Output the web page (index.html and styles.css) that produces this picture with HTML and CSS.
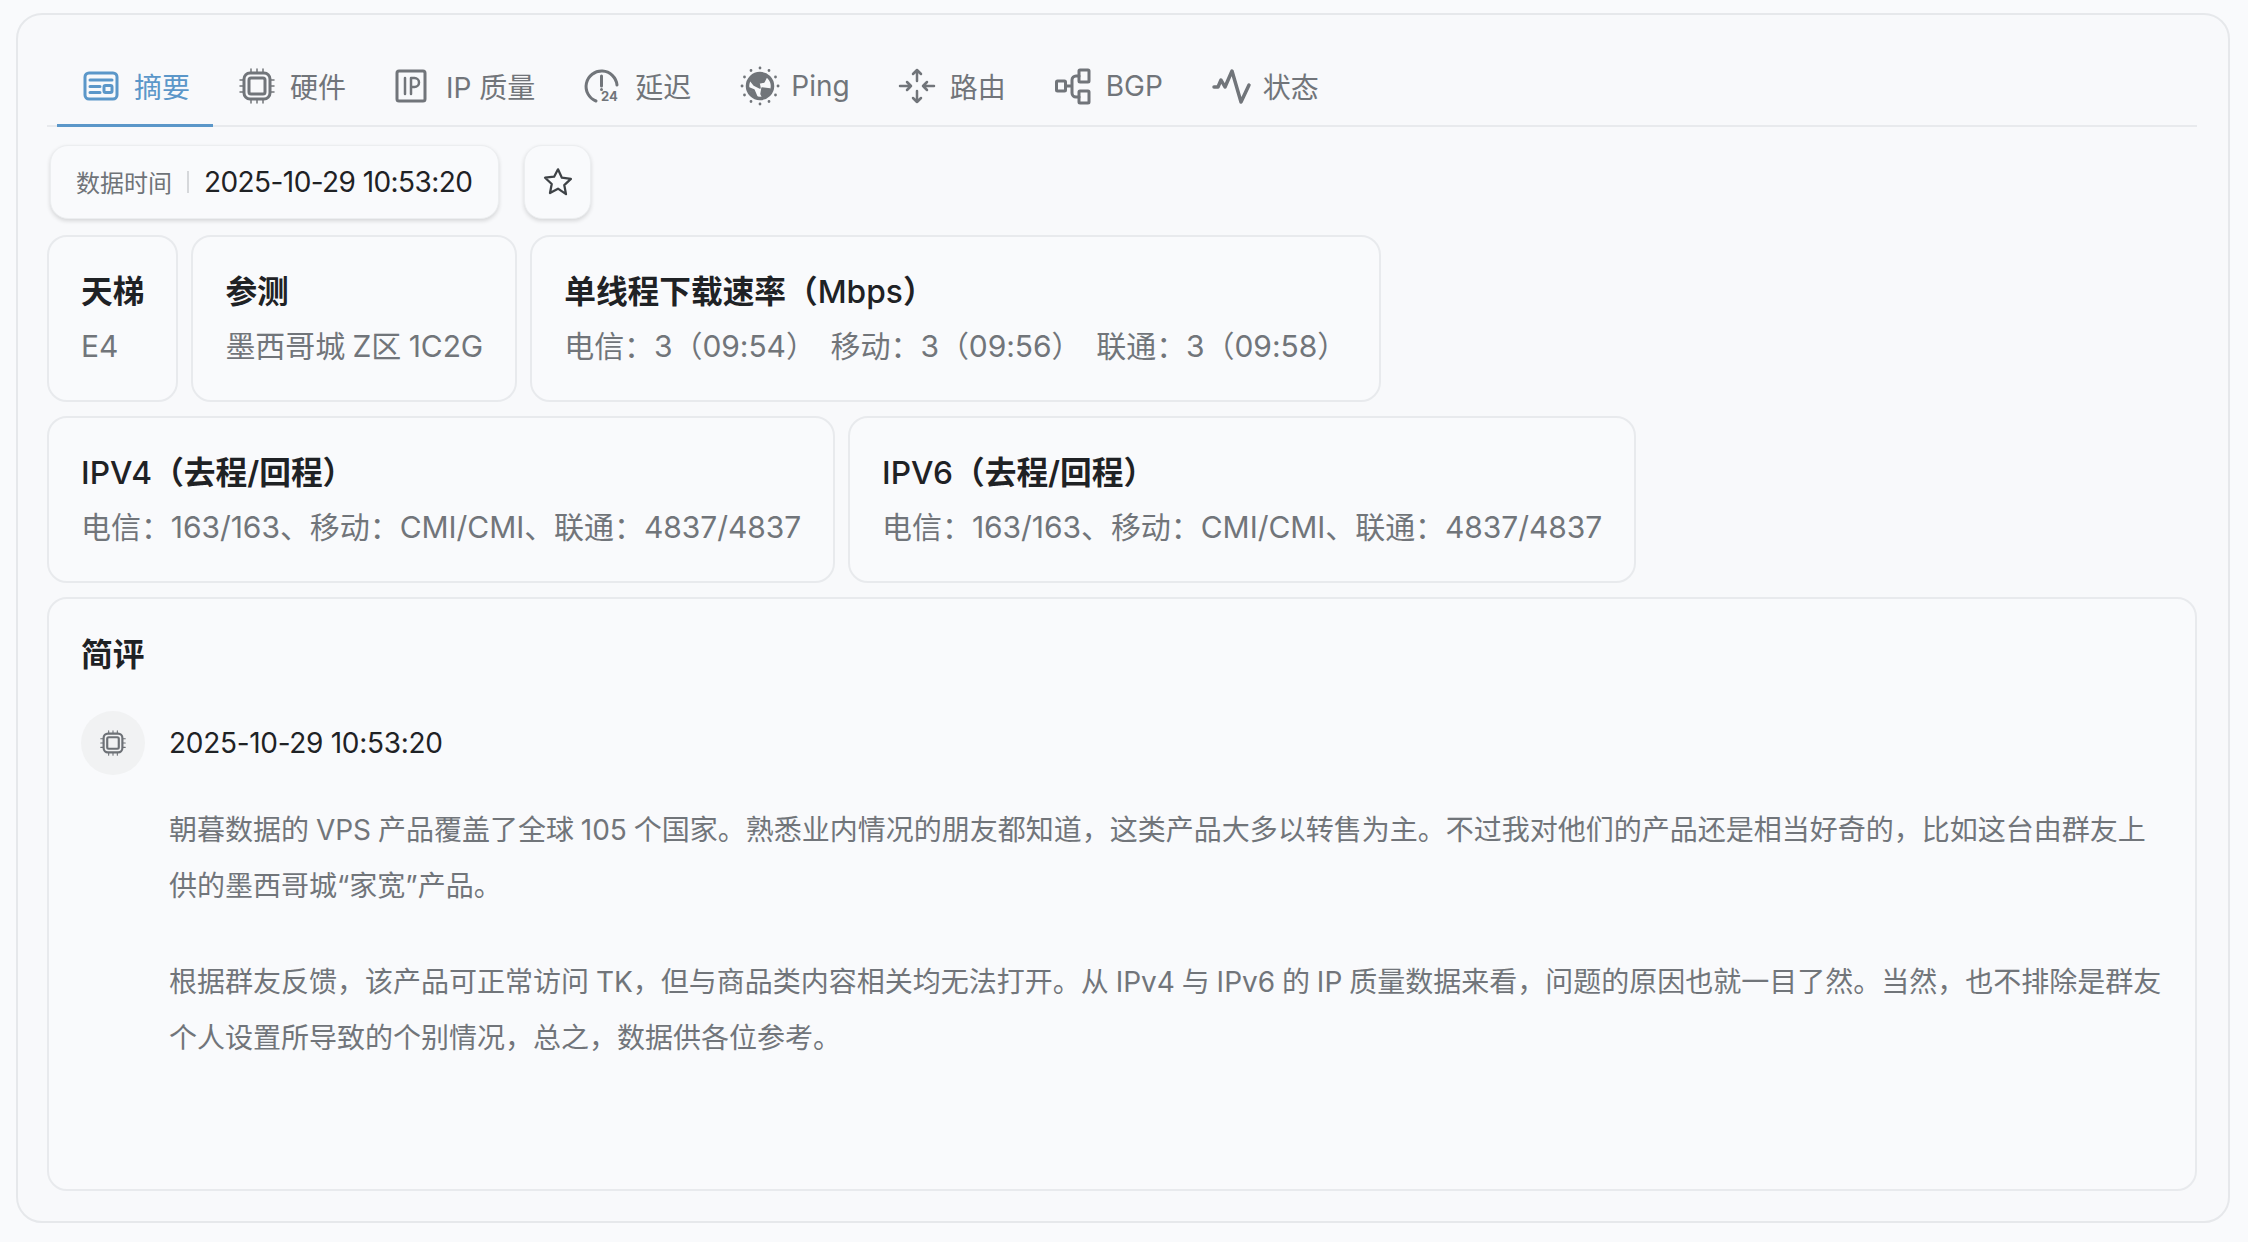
FILE: index.html
```html
<!DOCTYPE html>
<html lang="zh-CN">
<head>
<meta charset="utf-8">
<title>摘要</title>
<link rel="stylesheet" href="styles.css">
</head>
<body>
<main class="panel">
  <nav class="tabs">
    <a class="tab active">
      <svg class="ico" viewBox="0 0 36 36"><rect x="2" y="5" width="32" height="26" rx="4"/><path d="M7 12h22M7 18.500h10M7 24.500h10"/><rect x="21" y="17.500" width="8" height="7" rx="1.500"/></svg>
      <span>摘要</span></a>
    <a class="tab">
      <svg class="ico" viewBox="0 0 36 36"><rect x="5" y="5" width="26" height="26" rx="6"/><rect x="10" y="10" width="16" height="16" rx="2"/><path d="M12 1v3M18 1v3M24 1v3M12 32v3M18 32v3M24 32v3M1 12h3M1 18h3M1 24h3M32 12h3M32 18h3M32 24h3" class="thin"/></svg>
      <span>硬件</span></a>
    <a class="tab wide">
      <svg class="ico ip" viewBox="0 0 32 36"><rect x="2" y="3" width="28" height="30" rx="2"/><path d="M10 10v16M16 26V10h3.500a4.500 4.500 0 0 1 0 9H16" class="mid"/></svg>
      <span>IP 质量</span></a>
    <a class="tab">
      <svg class="ico" viewBox="0 0 36 36"><path d="M12 33A15.500 15.500 0 1 1 33 17"/><path d="M17.500 8v10M17.500 21.500v.1"/><text class="ico-text" x="17" y="33">24</text></svg>
      <span>延迟</span></a>
    <a class="tab tight">
      <svg class="ico globe" viewBox="0 0 40 40"><circle cx="20" cy="20" r="12.500"/><path class="fill" d="M12 11l7-3 8 2-3 6-5 1 1 5-6-3-4-5zM22 22l8 1-1 3-6 6-2-4zM9 22l5 2 3 7-4-2z"/><path class="dots" d="M20 2v.1M20 38v.1M2 20h.1M38 20h.1M11 4.500v.1M29 4.500v.1M11 35.500v.1M29 35.500v.1M4.500 11v.1M35.500 11v.1M4.500 29v.1M35.500 29v.1"/></svg>
      <span>Ping</span></a>
    <a class="tab">
      <svg class="ico" viewBox="0 0 36 36"><path class="mid" d="M18 2v11M14 6l4-4 4 4M18 23v11M14 30l4 4 4-4M1 18h11M8 14l4 4-4 4M24 18h11M28 14l-4 4 4 4"/></svg>
      <span>路由</span></a>
    <a class="tab">
      <svg class="ico" viewBox="0 0 36 36"><rect x="1.500" y="13" width="9" height="10" rx="1"/><rect x="24" y="2" width="10" height="12" rx="1"/><rect x="24" y="23" width="10" height="12" rx="1"/><path d="M10.500 18H17M24 8h-3a4 4 0 0 0-4 4v13a4 4 0 0 0 4 4h3"/></svg>
      <span>BGP</span></a>
    <a class="tab tight">
      <svg class="ico pulse-ico" viewBox="0 0 40 36"><path class="pulse" d="M2 19h4l3-7 4 7 7-16 9 31 8-17"/></svg>
      <span>状态</span></a>
  </nav>

  <div class="toolbar">
    <div class="chip"><span class="chip-label">数据时间</span><span class="chip-sep"></span><span class="chip-value">2025-10-29 10:53:20</span></div>
    <button class="star" type="button" aria-label="收藏">
      <svg viewBox="0 0 24 24"><path d="M12 2.500l2.900 6.300 6.800.8-5 4.700 1.300 6.800L12 17l-6 3.300 1.300-6.800-5-4.700 6.800-.8z"/></svg>
    </button>
  </div>

  <div class="row">
    <section class="stat"><h3>天梯</h3><p>E4</p></section>
    <section class="stat"><h3>参测</h3><p>墨西哥城 Z区 1C2G</p></section>
    <section class="stat"><h3>单线程下载速率（<span class="lat">Mbps</span>）</h3><p>电信：3（09:54）&nbsp; 移动：3（09:56）&nbsp; 联通：3（09:58）</p></section>
  </div>
  <div class="row">
    <section class="stat"><h3><span class="lat">IPV4</span>（去程/回程）</h3><p>电信：163/163、移动：CMI/CMI、联通：4837/4837</p></section>
    <section class="stat"><h3><span class="lat">IPV6</span>（去程/回程）</h3><p>电信：163/163、移动：CMI/CMI、联通：4837/4837</p></section>
  </div>

  <section class="review">
    <h3>简评</h3>
    <div class="entry-head">
      <span class="avatar"><svg class="ico small" viewBox="0 0 36 36"><rect x="5" y="5" width="26" height="26" rx="6"/><rect x="10" y="10" width="16" height="16" rx="2"/><path d="M12 1v3M18 1v3M24 1v3M12 32v3M18 32v3M24 32v3M1 12h3M1 18h3M1 24h3M32 12h3M32 18h3M32 24h3" class="thin"/></svg></span>
      <time>2025-10-29 10:53:20</time>
    </div>
    <div class="entry-body">
      <p>朝暮数据的 VPS 产品覆盖了全球 105 个国家。熟悉业内情况的朋友都知道，这类产品大多以转售为主。不过我对他们的产品还是相当好奇的，比如这台由群友上供的墨西哥城“家宽”产品。</p>
      <p>根据群友反馈，该产品可正常访问 TK，但与商品类内容相关均无法打开。从 IPv4 与 IPv6 的 IP 质量数据来看，问题的原因也就一目了然。当然，也不排除是群友个人设置所导致的个别情况，总之，数据供各位参考。</p>
    </div>
  </section>
</main>
</body>
</html>
```
FILE: styles.css
```css
* { box-sizing: border-box; }
html, body { margin: 0; height: 100%; }
body {
  background: #f9fafc;
  color: #1f2225;
  font-family: Inter, "Noto Sans CJK SC", sans-serif;
  padding: 13px 18px 19px 16px;
  overflow: hidden;
}
.panel {
  height: 1210px;
  border: 2px solid #e6e8eb;
  border-radius: 26px;
  background: #f8f9fb;
  padding: 36px 31px 30px 29px;
  display: flex;
  flex-direction: column;
}
.tabs {
  display: flex;
  height: 76px;
  border-bottom: 2px solid #e8eaed;
  padding-left: 10px;
  flex: none;
}
.tab {
  display: flex;
  align-items: center;
  gap: 15px;
  padding: 0 24.500px 6px;
  height: 76px;
  font-size: 28px;
  color: #71757a;
  white-space: nowrap;
}
.tab.tight { gap: 11px; }
.tab.wide { gap: 19px; }
.tab.active {
  color: #5b97c9;
  border-bottom: 3px solid #5b97c9;
  padding: 0 23px 3px 26px;
  margin-right: 1.500px;
}
.ico {
  width: 36px;
  height: 36px;
  fill: none;
  stroke: currentColor;
  stroke-width: 3;
  stroke-linecap: round;
  stroke-linejoin: round;
  flex: none;
  overflow: visible;
}
.ico.ip { width: 32px; }
.ico.globe { width: 40px; height: 40px; }
.ico.globe circle { stroke-width: 3.500; }
.ico.pulse-ico { width: 40px; }
.ico-text {
  font-family: Inter, sans-serif;
  font-size: 13px;
  font-weight: 700;
  fill: currentColor;
  stroke: none;
}
.ico .thin { stroke-width: 1.500; }
.ico .mid { stroke-width: 2.500; }
.ico .fill { fill: currentColor; stroke-width: 1.500; }
.ico .dots { stroke-width: 2.800; }
.ico .pulse { stroke-width: 3.500; }
.ico.small { width: 26px; height: 26px; }
.toolbar {
  display: flex;
  gap: 25px;
  margin-top: 18px;
  padding-left: 3px;
  flex: none;
}
.chip, .star {
  height: 74px;
  background: #f9fafc;
  border: 1px solid #eceef0;
  border-radius: 18px;
  box-shadow: 0 2px 4px rgba(0, 0, 0, .14);
}
.chip {
  display: flex;
  align-items: center;
  padding: 0 26px 0 25px;
}
.chip-label { font-size: 24px; color: #6f7378; padding-bottom: 2px; }
.chip-sep { width: 2px; height: 22px; background: #d6d8db; margin: 0 15px; }
.chip-value { font-size: 28px; color: #1f2225; letter-spacing: -.58px; }
.star {
  width: 67px;
  padding: 0;
  display: flex;
  align-items: center;
  justify-content: center;
}
.star svg {
  width: 32px;
  height: 32px;
  fill: none;
  stroke: #3e4246;
  stroke-width: 1.700;
  stroke-linejoin: round;
}
.row {
  display: flex;
  gap: 13px;
  margin-top: 14px;
  flex: none;
}
.toolbar + .row { margin-top: 16px; }
.stat, .review {
  border: 2px solid #e8eaed;
  border-radius: 20px;
  background: #f9fafc;
}
.stat {
  height: 167px;
  padding: 32px 32px 0;
}
h3 {
  margin: 0;
  font-size: 31.700px;
  line-height: 46px;
  font-weight: 600;
  color: #1f2225;
}
.lat { font-weight: 500; }
.stat p {
  margin: 8px 0 0;
  font-size: 30px;
  line-height: 46px;
  color: #71757a;
  white-space: nowrap;
  word-spacing: -1px;
  letter-spacing: -.06px;
}
.review {
  margin-top: 14px;
  flex: 1;
  padding: 33px 32px 0;
}
.entry-head {
  display: flex;
  align-items: center;
  gap: 24px;
  margin-top: 33px;
}
.avatar {
  width: 64px;
  height: 64px;
  border-radius: 50%;
  background: #f1f2f3;
  color: #6d7176;
  display: flex;
  align-items: center;
  justify-content: center;
  flex: none;
}
time { font-size: 28px; color: #1f2225; letter-spacing: -.3px; }
.entry-body { padding-left: 88px; margin-top: 27px; }
.entry-body p {
  margin: 0 0 40px;
  font-size: 28px;
  line-height: 56px;
  color: #71757a;
  word-spacing: -1px;
}
```
